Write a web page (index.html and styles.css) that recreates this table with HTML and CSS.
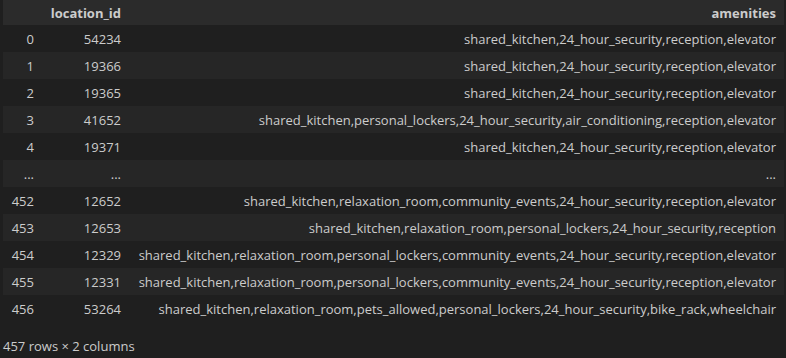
FILE: index.html
```html
<!DOCTYPE html>
<html>
<head>
<meta charset="utf-8">
<link rel="stylesheet" href="styles.css">
</head>
<body>
<div class="output">
  <table class="df">
    <colgroup>
      <col class="c-idx">
      <col class="c-loc">
      <col class="c-am">
    </colgroup>
    <thead>
      <tr><th></th><th>location_id</th><th>amenities</th></tr>
    </thead>
    <tbody>
      <tr><th>0</th><td>54234</td><td>shared_kitchen,24_hour_security,reception,elevator</td></tr>
      <tr><th>1</th><td>19366</td><td>shared_kitchen,24_hour_security,reception,elevator</td></tr>
      <tr><th>2</th><td>19365</td><td>shared_kitchen,24_hour_security,reception,elevator</td></tr>
      <tr><th>3</th><td>41652</td><td>shared_kitchen,personal_lockers,24_hour_security,air_conditioning,reception,elevator</td></tr>
      <tr><th>4</th><td>19371</td><td>shared_kitchen,24_hour_security,reception,elevator</td></tr>
      <tr><th>...</th><td>...</td><td>...</td></tr>
      <tr><th>452</th><td>12652</td><td>shared_kitchen,relaxation_room,community_events,24_hour_security,reception,elevator</td></tr>
      <tr><th>453</th><td>12653</td><td>shared_kitchen,relaxation_room,personal_lockers,24_hour_security,reception</td></tr>
      <tr><th>454</th><td>12329</td><td>shared_kitchen,relaxation_room,personal_lockers,community_events,24_hour_security,reception,elevator</td></tr>
      <tr><th>455</th><td>12331</td><td>shared_kitchen,relaxation_room,personal_lockers,community_events,24_hour_security,reception,elevator</td></tr>
      <tr><th>456</th><td>53264</td><td>shared_kitchen,relaxation_room,pets_allowed,personal_lockers,24_hour_security,bike_rack,wheelchair</td></tr>
    </tbody>
  </table>
  <p class="shape">457 rows × 2 columns</p>
</div>
</body>
</html>
```

FILE: styles.css
```css
html, body {
  margin: 0;
  padding: 0;
  background: #1f1f1f;
}
body {
  width: 786px;
  height: 358px;
  overflow: hidden;
  font-family: "Open Sans", "Noto Sans", sans-serif;
  font-size: 13px;
  color: #cccccc;
}
.output {
  padding-left: 3px;
}
.df {
  border-collapse: collapse;
  table-layout: fixed;
  width: 781px;
}
.c-idx { width: 39px; }
.c-loc { width: 87px; }
.c-am { width: 655px; }
.df th, .df td {
  padding: 2px 8px 0;
  text-align: right;
  white-space: nowrap;
  line-height: 25px;
  height: 25px;
  font-weight: normal;
}
.df thead th {
  background: #2b2b2b;
  font-weight: bold;
  padding-top: 1px;
  height: 24px;
  line-height: 24px;
}
.df tbody tr:nth-child(even) {
  background: #262626;
}
.shape {
  margin: 15px 0 0 0;
  line-height: 19px;
}
```
